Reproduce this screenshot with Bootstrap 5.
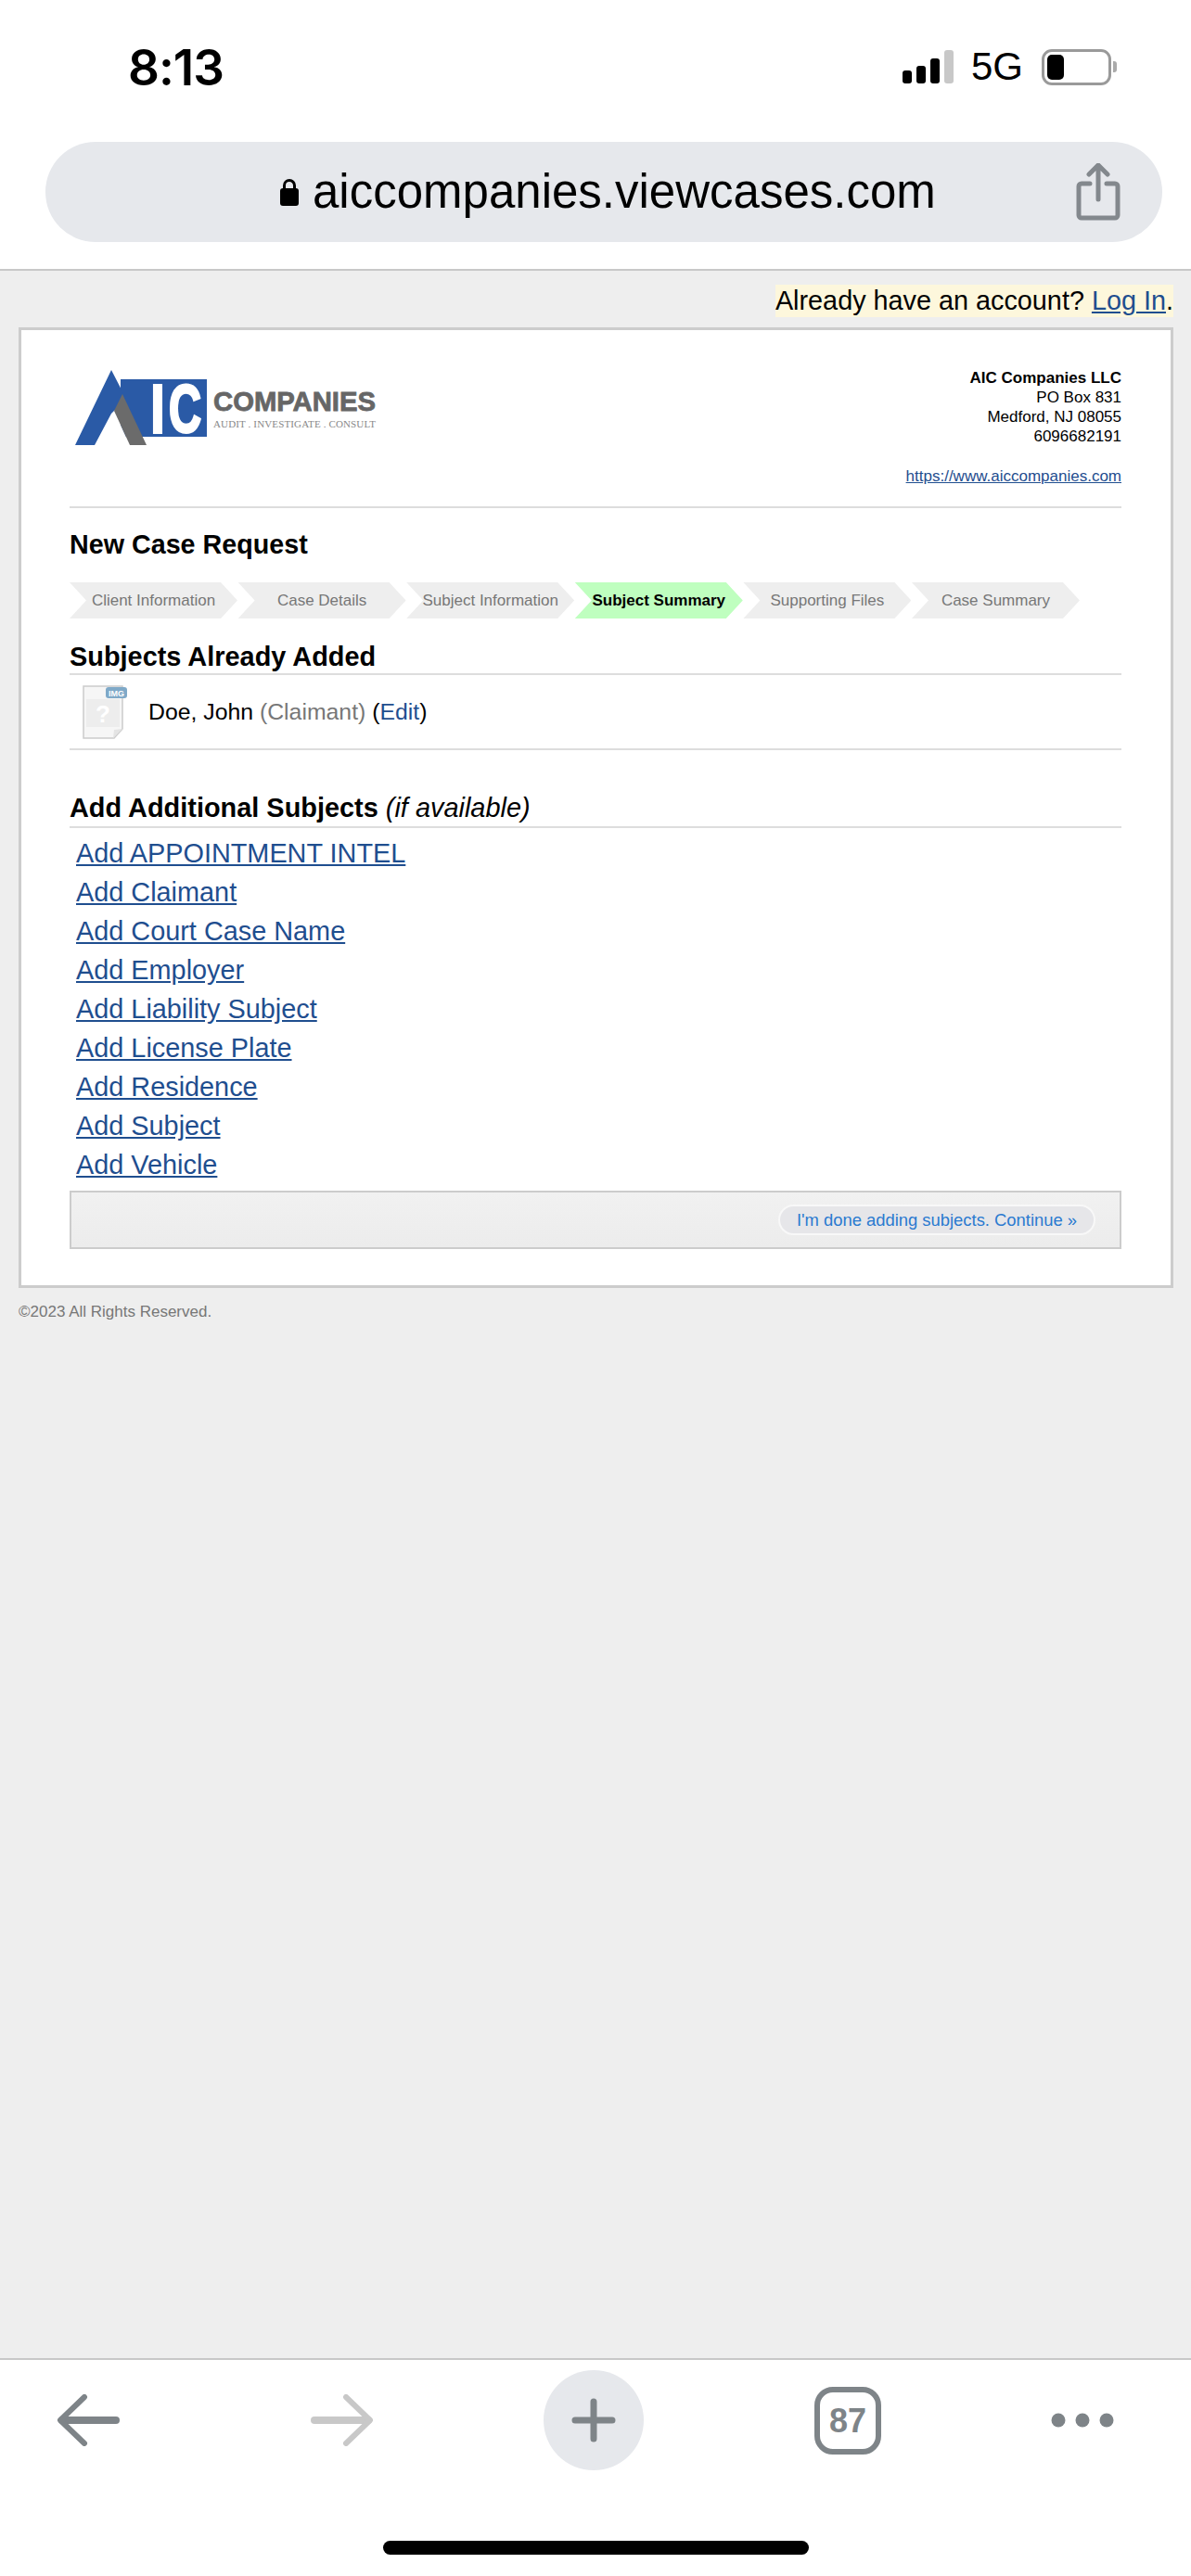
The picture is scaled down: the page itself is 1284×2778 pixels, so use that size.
<!DOCTYPE html>
<html lang="en">
<head>
  <meta charset="UTF-8">
  <title>New Case Request</title>
  <link href="https://cdn.jsdelivr.net/npm/bootstrap@5.3.3/dist/css/bootstrap.min.css" rel="stylesheet">
  <style>
    html, body { height: 2778px; }
    body { font-family: "Liberation Sans", Arial, sans-serif; background: #fff; color: #000; }
    a { color: #1f4e8f; }

    /* phone chrome */
    .top-chrome { height: 292px; border-bottom: 2px solid #c8c8c8; }
    .status-row { height: 153px; padding: 0 80px 53px 138px; }
    .status-time { font-size: 53px; font-weight: 600; line-height: 1; font-family: Inter, "Liberation Sans", sans-serif; letter-spacing: -1px; }
    .status-right { margin-bottom: 7px; }
    .signal-bars { height: 36px; width: 58px; gap: 5px; }
    .signal-bars span { width: 10px; background: #000; border-radius: 3px; }
    .signal-bars .bar-1 { height: 14px; }
    .signal-bars .bar-2 { height: 19px; }
    .signal-bars .bar-3 { height: 27px; }
    .signal-bars .bar-4 { height: 36px; background: #c8c8c8; }
    .net-label { font-size: 42px; line-height: 1; margin: 0 20px 0 16px; }
    .batt-shell { width: 75px; height: 39px; border: 3px solid #9a9a9a; border-radius: 11px; padding: 3px; }
    .batt-fill { width: 18px; height: 100%; background: #000; border-radius: 5px; }
    .batt-nub { width: 4px; height: 12px; background: #aaa; border-radius: 0 3px 3px 0; margin-left: 2px; }
    .url-bar { height: 108px; margin: 0 31px 0 49px; background: #e6e8ec; border-radius: 54px; padding-left: 253px; padding-right: 45px; }
    .url-text { font-size: 51px; line-height: 1.2; margin-left: 15px; }

    /* page */
    .page-area { background: #eee; }
    .login-note { padding: 15px 19px 11px 0; font-size: 28.8px; line-height: 35px; }
    .login-note span { display: inline-block; background: #fdf7dc; }
    .case-sheet { margin: 0 19px 0 20px; height: 1036px; background: #fff; border: 3px solid #ccc; padding: 0 53px 0 52px; }
    .sheet-head { height: 192px; border-bottom: 2px solid #ddd; }
    .brand-logo { display: block; margin: 39px 0 0 3px; }
    .company-info { font-size: 17px; line-height: 21px; text-align: right; padding-top: 41px; }
    .company-url { display: block; margin-top: 22px; }
    .page-title { font-size: 28.7px; line-height: 34px; font-weight: 700; margin: 22px 0 24px; }

    .step-row { gap: 0.6px; margin-bottom: 23px; }
    .step-item { width: 181px; height: 39px; background: #eee; color: #777; font-size: 17px; line-height: 39px; text-align: center;
      clip-path: polygon(0 0, 163px 0, 181px 50%, 163px 100%, 0 100%, 18px 50%); }
    .step-item.is-active { background: #bfffbf; color: #000; font-weight: 700; }

    .sub-head { font-size: 28.9px; line-height: 36px; font-weight: 700; border-bottom: 2px solid #ddd; margin: 0; }
    .sub-head-gap { padding-bottom: 2px; }
    .sub-head em { font-weight: 400; }
    .subject-row { height: 81px; border-bottom: 2px solid #ddd; font-size: 24.8px; padding-left: 14px; margin-bottom: 44px; }
    .file-thumb { margin-right: 23px; }
    .subject-role { color: #777; }
    .subject-row a { text-decoration: none; }
    .add-list { padding: 6px 0 0 7px; margin: 0 0 7px; height: 384px; }
    .add-list a { display: block; width: fit-content; font-size: 28.85px; line-height: 42px; }
    .action-bar { height: 63px; border: 2px solid #ccc; background: linear-gradient(#f1f1f1, #ececec); padding-right: 26px; }
    .done-btn { font-size: 18.4px; line-height: 29px; color: #2a7ad0; background: #e6e6e9; border: 2px solid #f8f8f8; border-radius: 17px; padding: 0 18px; text-decoration: none; }
    .rights-note { color: #777; font-size: 17px; line-height: 21px; padding: 15px 0 0 20px; }

    /* bottom toolbar */
    .bottom-chrome { height: 235px; border-top: 2px solid #c8c8c8; }
    .tool-row { height: 130px; padding: 0 83px 0 61px; }
    .tool-back { margin-right: 22px; }
    .add-circle { width: 108px; height: 108px; background: #e6e8ec; border-radius: 50%; }
    .home-strip { width: 459px; height: 15px; background: #000; border-radius: 8px; margin: 65px auto 0; }
  </style>
</head>
<body class="d-flex flex-column">

  <header class="top-chrome">
    <div class="status-row d-flex justify-content-between align-items-end">
      <div class="status-time">8:13</div>
      <div class="status-right d-flex align-items-center">
        <div class="signal-bars d-flex align-items-end"><span class="bar-1"></span><span class="bar-2"></span><span class="bar-3"></span><span class="bar-4"></span></div>
        <div class="net-label">5G</div>
        <div class="batt-shell"><div class="batt-fill"></div></div>
        <div class="batt-nub"></div>
      </div>
    </div>
    <div class="url-bar d-flex align-items-center justify-content-between">
      <div class="d-flex align-items-center">
        <svg width="20" height="30" viewBox="0 0 20 30"><path d="M4.5 13V8a5.5 5.5 0 0 1 11 0v5" fill="none" stroke="#000" stroke-width="3"/><rect x="0" y="11" width="20" height="19" rx="3" fill="#000"/></svg>
        <div class="url-text">aiccompanies.viewcases.com</div>
      </div>
      <svg width="48" height="62" viewBox="0 0 48 62" fill="none" stroke="#83888d" stroke-width="5" stroke-linecap="round" stroke-linejoin="round"><path d="M24 3v36M14 12l10-10 10 10"/><path d="M15 22H6a3 3 0 0 0-3 3v31a3 3 0 0 0 3 3h36a3 3 0 0 0 3-3V25a3 3 0 0 0-3-3h-9"/></svg>
    </div>
  </header>

  <main class="page-area flex-grow-1">
    <div class="login-note text-end"><span>Already have an account? <a href="#">Log In</a>.</span></div>

    <div class="case-sheet">
      <div class="sheet-head d-flex justify-content-between">
        <svg class="brand-logo" width="370" height="90" viewBox="78 395 370 90">
          <rect x="130" y="409" width="93" height="62" fill="#2a5aa6"/>
          <text x="163" y="466" font-family="Liberation Sans" font-weight="700" font-size="72" fill="#fff" stroke="#fff" stroke-width="4" textLength="14" lengthAdjust="spacingAndGlyphs">I</text>
          <text x="182" y="466" font-family="Liberation Sans" font-weight="700" font-size="72" fill="#fff" stroke="#fff" stroke-width="3" textLength="35" lengthAdjust="spacingAndGlyphs">C</text>
          <polygon points="120,446 102,480 140,480 123,443" fill="#fff"/>
          <polygon points="120,399 136,430 120,446 102,480 81,480" fill="#2a5aa6"/>
          <polygon points="132,425 158,480 140,480 123,443" fill="#6b6b6b"/>
          <text x="230" y="443" font-family="Liberation Sans" font-weight="700" font-size="30" fill="#666" stroke="#666" stroke-width="0.8" textLength="175" lengthAdjust="spacingAndGlyphs">COMPANIES</text>
          <text x="230" y="461" font-family="Liberation Serif" font-size="11" fill="#888" textLength="175" lengthAdjust="spacing">AUDIT . INVESTIGATE . CONSULT</text>
        </svg>
        <div class="company-info">
          <strong>AIC Companies LLC</strong><br>
          PO Box 831<br>
          Medford, NJ 08055<br>
          6096682191
          <a class="company-url" href="#">https://www.aiccompanies.com</a>
        </div>
      </div>

      <h1 class="page-title">New Case Request</h1>

      <div class="step-row d-flex">
        <div class="step-item">Client Information</div>
        <div class="step-item">Case Details</div>
        <div class="step-item">Subject Information</div>
        <div class="step-item is-active">Subject Summary</div>
        <div class="step-item">Supporting Files</div>
        <div class="step-item">Case Summary</div>
      </div>

      <h2 class="sub-head">Subjects Already Added</h2>
      <div class="subject-row d-flex align-items-center">
        <svg class="file-thumb" width="48" height="58" viewBox="0 0 48 58">
          <path d="M1 1h42v46l-9 10H1z" fill="#f6f6f6" stroke="#ccc" stroke-width="1.5"/>
          <path d="M43 47l-9 1-1 9z" fill="#e4e4e4"/>
          <rect x="4" y="15" width="36" height="30" fill="#ededed"/>
          <text x="22" y="40" text-anchor="middle" font-family="Liberation Sans" font-weight="700" font-size="26" fill="#fff">?</text>
          <rect x="25" y="2" width="23" height="12" rx="3" fill="#7fa9c8"/>
          <text x="36.5" y="11.5" text-anchor="middle" font-family="Liberation Sans" font-weight="700" font-size="9" fill="#fff">IMG</text>
        </svg>
        <div>Doe, John <span class="subject-role">(Claimant)</span> (<a href="#">Edit</a>)</div>
      </div>

      <h2 class="sub-head sub-head-gap">Add Additional Subjects <em>(if available)</em></h2>
      <div class="add-list">
        <a href="#">Add APPOINTMENT INTEL</a>
        <a href="#">Add Claimant</a>
        <a href="#">Add Court Case Name</a>
        <a href="#">Add Employer</a>
        <a href="#">Add Liability Subject</a>
        <a href="#">Add License Plate</a>
        <a href="#">Add Residence</a>
        <a href="#">Add Subject</a>
        <a href="#">Add Vehicle</a>
      </div>

      <div class="action-bar d-flex align-items-center justify-content-end">
        <a class="done-btn" href="#">I'm done adding subjects. Continue »</a>
      </div>
    </div>

    <div class="rights-note">©2023 All Rights Reserved.</div>
  </main>

  <footer class="bottom-chrome">
    <div class="tool-row d-flex justify-content-between align-items-center">
      <svg class="tool-back" width="68" height="56" viewBox="0 0 68 56" fill="none" stroke="#7e8488" stroke-linecap="round" stroke-linejoin="round"><path d="M64 28H6" stroke-width="8"/><path d="M30 3 4 28l26 25" stroke-width="6"/></svg>
      <svg width="68" height="56" viewBox="0 0 68 56" fill="none" stroke="#c8c8c8" stroke-linecap="round" stroke-linejoin="round"><path d="M4 28h58" stroke-width="8"/><path d="M38 3l26 25-26 25" stroke-width="6"/></svg>
      <div class="add-circle d-flex align-items-center justify-content-center">
        <svg width="48" height="48" viewBox="0 0 48 48" stroke="#7e8488" stroke-width="7" stroke-linecap="round"><path d="M24 4v40M4 24h40"/></svg>
      </div>
      <svg width="72" height="73" viewBox="0 0 72 73"><rect x="3" y="3" width="66" height="67" rx="17" fill="none" stroke="#7e8488" stroke-width="6"/><text x="36" y="49" text-anchor="middle" font-family="Liberation Sans" font-weight="700" font-size="36" fill="#7e8488">87</text></svg>
      <svg width="68" height="16" viewBox="0 0 68 16" fill="#7e8488"><circle cx="8" cy="8" r="7.5"/><circle cx="34" cy="8" r="7.5"/><circle cx="60" cy="8" r="7.5"/></svg>
    </div>
    <div class="home-strip"></div>
  </footer>

  <script src="https://cdn.jsdelivr.net/npm/bootstrap@5.3.3/dist/js/bootstrap.bundle.min.js"></script>
</body>
</html>
